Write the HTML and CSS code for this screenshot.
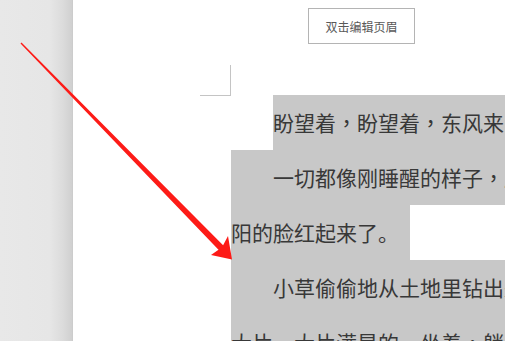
FILE: index.html
```html
<!DOCTYPE html>
<html lang="zh">
<head>
<meta charset="utf-8">
<link rel="stylesheet" href="styles.css">
</head>
<body>
<div class="app">
  <div class="gutter"></div>
  <div class="page">
    <div class="header-row">
      <div class="header-btn">双击编辑页眉</div>
    </div>
    <div class="corner-row">
      <div class="corner"></div>
    </div>
    <div class="body-text">
      <div class="line sel indent">盼望着<span class="pc" lang="zh-TW">，</span>盼望着<span class="pc" lang="zh-TW">，</span>东风来了<span class="pc" lang="zh-TW">，</span>春天的脚步近了。</div>
      <div class="line sel indent-text">一切都像刚睡醒的样子<span class="pc" lang="zh-TW">，</span>欣欣然张开了眼。</div>
      <div class="line"><span class="sel part">阳的脸红起来了。</span></div>
      <div class="line sel indent-text">小草偷偷地从土地里钻出来<span class="pc" lang="zh-TW">，</span>嫩嫩的<span class="pc" lang="zh-TW">，</span>绿绿的。</div>
      <div class="line sel">大片一大片满是的。坐着<span class="pc" lang="zh-TW">，</span>躺着<span class="pc" lang="zh-TW">，</span>打两个滚。</div>
    </div>
  </div>
</div>
<svg class="arrow" width="505" height="341" viewBox="0 0 505 341">
  <polygon fill="#fd1b17" points="21.5,42.5 223.1,245.3 228,236 232,259.5 211,255 218.5,249.7 20.5,43.5"/>
</svg>
</body>
</html>
```
FILE: styles.css
```css
html, body {
  margin: 0;
  padding: 0;
  width: 505px;
  height: 341px;
  overflow: hidden;
  background: #fff;
}
.app {
  display: flex;
  width: 505px;
  height: 341px;
}
.gutter {
  width: 73px;
  flex: none;
  background: linear-gradient(to right, #e8e8e8 0px, #e6e6e6 50px, #dcdcdc 62px, #d0d0d0 72px, #c8c8c8 73px);
}
.page {
  flex: 1;
  background: #fff;
  display: flex;
  flex-direction: column;
  overflow: hidden;
}
.header-row {
  padding-top: 8px;
  padding-left: 235px;
  height: 36px;
}
.header-btn {
  box-sizing: border-box;
  width: 107px;
  height: 36px;
  border: 1px solid #b4b4b4;
  display: flex;
  align-items: center;
  justify-content: center;
  font-family: "Noto Sans CJK SC", sans-serif;
  font-size: 12px;
  color: #595959;
}
.corner-row {
  padding-top: 21px;
  padding-left: 127px;
  height: 31px;
}
.corner {
  box-sizing: border-box;
  width: 31px;
  height: 31px;
  border-right: 1px solid #c4c4c4;
  border-bottom: 1px solid #c4c4c4;
}
.body-text {
  margin-left: 158px;
  margin-top: -1px;
  font-family: "Noto Sans CJK SC", sans-serif;
  font-size: 21px;
  color: #383838;
}
.line {
  height: 55px;
  line-height: 55px;
  white-space: nowrap;
  overflow: hidden;
}
.pc {
  font-family: "Noto Sans CJK TC", sans-serif;
}
.sel {
  background: #c8c8c8;
}
.indent {
  margin-left: 42px;
}
.indent-text {
  text-indent: 42px;
}
.part {
  display: inline-block;
  width: 179px;
  height: 55px;
}
.arrow {
  position: absolute;
  left: 0;
  top: 0;
  pointer-events: none;
}
```
